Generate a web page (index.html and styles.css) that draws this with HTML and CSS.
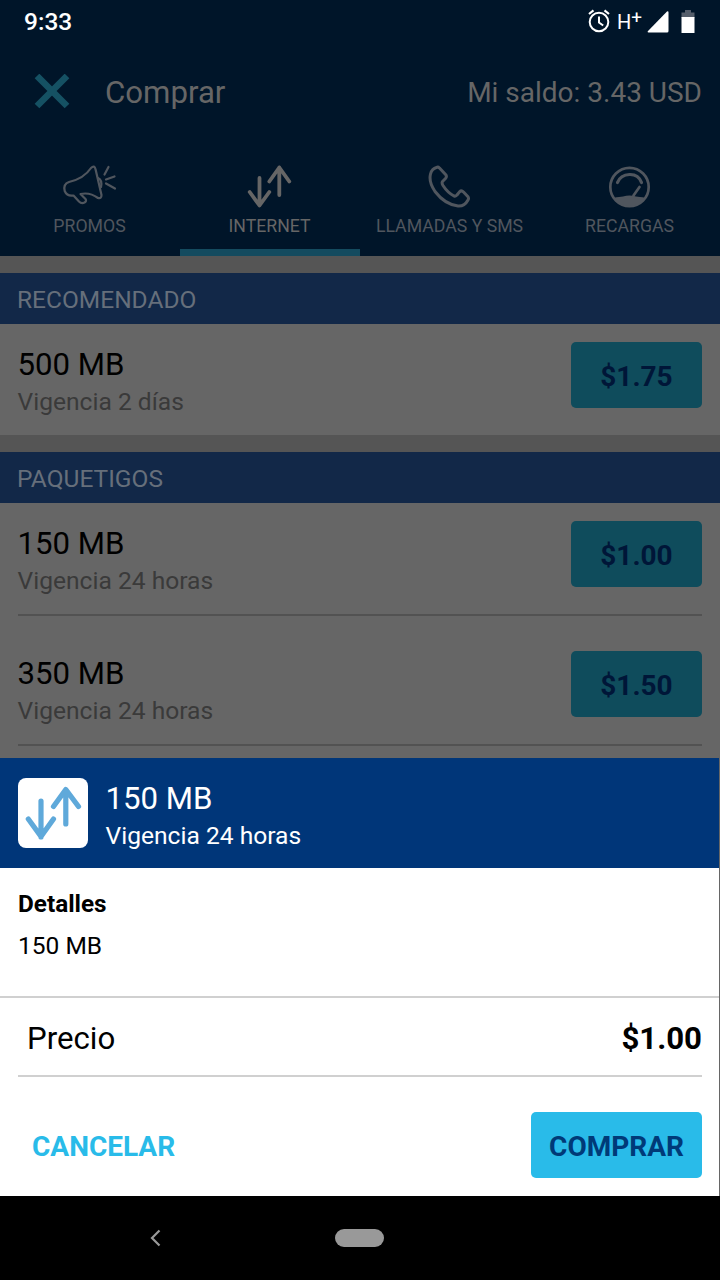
FILE: index.html
```html
<!DOCTYPE html>
<html lang="es">
<head>
<meta charset="utf-8">
<title>Comprar</title>
<link rel="stylesheet" href="styles.css">
</head>
<body>
<div class="screen">
  <header class="top">
    <div class="status">
      <span class="clock">9:33</span>
      <div class="status-icons">
        <svg class="alarm" width="24" height="26" viewBox="0 0 24 26" fill="none" stroke="#fff" stroke-width="2"><circle cx="12" cy="13" r="9.3"/><path d="M12 7.500v6l4.200 3"/><path d="M2 5 6.500 1.300M22 5 17.500 1.300" stroke-width="2.200"/></svg>
        <span class="net">H<span class="plus">+</span></span>
        <svg class="signal" width="22" height="22" viewBox="0 0 22 22"><path d="M20 .6q1.500-.8 1.500 1V20q0 1.500-1.500 1.500H1.500q-1.500-.3-.5-1.500z" fill="#fff"/></svg>
        <svg class="battery" width="14" height="24" viewBox="0 0 14 24"><path d="M4 0h6v2.500h3.500V8H.5V2.500H4z" fill="#555e6b"/><path d="M.5 7h13v16h-13z" fill="#fff"/></svg>
      </div>
    </div>
    <div class="appbar">
      <svg class="close" width="36" height="36" viewBox="0 0 36 36"><path d="M3 2 33 32M33 2 3 32" stroke="#155163" stroke-width="6.600"/></svg>
      <h1 class="title">Comprar</h1>
      <span class="balance">Mi saldo: 3.43 USD</span>
    </div>
    <nav class="tabs">
      <div class="tab">
        <svg class="tab-icon" width="60" height="48" viewBox="0 0 60 48" fill="none" stroke="#50565e" stroke-width="2.200" stroke-linecap="round" stroke-linejoin="round"><path d="M31 8Q34.500 4.500 35.600 9.500L41.500 35Q41.500 39 38 38Q30 32 20.500 34L25.500 39Q27 41 24.500 42.500Q21.500 44 19 41.500L13.500 35.500Q7 36.500 4.700 31Q3 24 9 22Q24 18.500 31 8Z"/><path d="M38 18Q42.500 20 41 27M44.500 14.500 48.500 7M46 19.500 54.500 16.500M46 23.500 55 28.500"/></svg>
        <span>PROMOS</span>
      </div>
      <div class="tab active">
        <svg class="tab-icon" width="60" height="48" viewBox="0 0 60 48" fill="none" stroke="#666" stroke-width="3.800" stroke-linecap="round" stroke-linejoin="round"><path d="M19.500 18v27M9.700 32l9.800 13.500L29.300 32M39.300 35V7.500M29.300 21.500 39.300 7.500 49.300 21.500"/></svg>
        <span>INTERNET</span>
      </div>
      <div class="tab">
        <svg class="tab-icon" width="60" height="48" viewBox="0 0 60 48" fill="none" stroke="#50565e" stroke-width="3" stroke-linecap="round" stroke-linejoin="round"><path transform="translate(0 1)" d="M16.500 6.500Q18 5.600 19.500 7L26 14Q27 16 25.500 17.500L22.500 20.500Q21.500 22 23 24.500Q27.500 31.500 34 35Q36 35.500 37 34L39.500 30.800Q41.500 29 43.500 31L48 35.800Q49 37.500 48 39Q44.500 45.500 38 45Q25 43.500 15 30.500Q8.500 21 10.500 13Q12 7.500 16.500 6.500Z"/></svg>
        <span>LLAMADAS Y SMS</span>
      </div>
      <div class="tab">
        <svg class="tab-icon" width="60" height="48" viewBox="0 0 60 48" fill="none" stroke="#50565e" stroke-width="2.700" stroke-linecap="round"><circle cx="29.500" cy="27" r="19.200"/><path d="M17.500 22.500Q20.500 14.800 29.500 14.500T41.500 22.500" stroke-width="3.200"/><path d="M33.500 35.500 39.500 27"/><path d="M13.500 38Q20 36.500 23 36.500Q29.500 34.500 36 36.500Q39 36.500 45.500 38Q39 46 29.500 46T13.500 38Z" fill="#50565e" stroke="none"/></svg>
        <span>RECARGAS</span>
      </div>
    </nav>
  </header>

  <main class="list">
    <section class="group">
      <h2 class="band">RECOMENDADO</h2>
      <div class="item"><div><p class="name">500 MB</p><p class="term">Vigencia 2 días</p></div><div class="price">$1.75</div></div>
    </section>
    <section class="group">
      <h2 class="band">PAQUETIGOS</h2>
      <div class="item"><div><p class="name">150 MB</p><p class="term">Vigencia 24 horas</p></div><div class="price">$1.00</div></div>
      <hr class="rule">
      <div class="item"><div><p class="name">350 MB</p><p class="term">Vigencia 24 horas</p></div><div class="price">$1.50</div></div>
      <hr class="rule">
    </section>
  </main>

  <section class="sheet">
    <div class="sheet-head">
      <div class="tile"><svg width="70" height="70" viewBox="0 0 70 70" fill="none" stroke="#5fa9da" stroke-width="5.200" stroke-linecap="round" stroke-linejoin="round"><path d="M23 23v36M10.300 41 23 58.500 35.500 41M47.800 46V12M35.500 28.500 47.800 11.500 60.500 28.500"/></svg></div>
      <div class="sheet-text"><p class="name">150 MB</p><p class="term">Vigencia 24 horas</p></div>
    </div>
    <div class="details">
      <h3 class="details-title">Detalles</h3>
      <p class="details-text">150 MB</p>
    </div>
    <div class="total"><span class="total-label">Precio</span><span class="total-value">$1.00</span></div>
    <div class="actions"><span class="cancel">CANCELAR</span><div class="buy">COMPRAR</div></div>
  </section>

  <footer class="navbar">
    <svg class="back" width="12" height="18" viewBox="0 0 12 18"><path d="M9.500 1.500 2 9l7.500 7.500" fill="none" stroke="#999" stroke-width="2.200"/></svg>
    <div class="home"></div>
  </footer>
</div>
</body>
</html>
```
FILE: styles.css
```css
* { box-sizing: border-box; margin: 0; padding: 0; }
body { width: 720px; height: 1280px; background: #666; font-family: Roboto, "Liberation Sans", sans-serif; overflow: hidden; }
svg { display: block; flex: none; }
span, p, h1, h2, h3 { white-space: nowrap; }
.screen { width: 720px; height: 1280px; display: flex; flex-direction: column; }

.top { height: 256px; background: #001529; flex: none; }
.status { height: 44px; padding: 0 25px 0 24px; display: flex; justify-content: space-between; align-items: center; color: #fff; }
.clock { font-size: 24.5px; font-weight: 500; line-height: 44px; }
.status-icons { display: flex; align-items: center; height: 42px; }
.net { font-size: 20px; line-height: 22px; margin-left: 6px; display: flex; }
.plus { font-size: 19px; line-height: 14px; }
.signal { margin-left: 5px; }
.battery { margin-left: 12px; }
.appbar { height: 96px; padding: 0 18px 0 34px; display: flex; align-items: center; color: #666; }
.title { margin-left: 35px; padding-top: 2px; font-size: 31.2px; font-weight: 400; line-height: 40px; }
.balance { margin-left: auto; font-size: 28px; line-height: 40px; padding-top: 1px; }
.tabs { height: 116px; display: grid; grid-template-columns: repeat(4, 180px); }
.tab { display: flex; flex-direction: column; align-items: center; padding-top: 20px; font-size: 17.700px; line-height: 24px; color: #50565e; gap: 6px; border-bottom: 7px solid transparent; }
.tab span { margin-left: -1px; }
.tab.active { border-color: #144b5f; color: #666; }

.list { height: 502px; flex: none; background: #666; overflow: hidden; }
.group { border-top: 17px solid #555; }
.band { height: 51px; padding: 0 17px; background: #122848; color: #666f7b; font-size: 24.500px; font-weight: 400; line-height: 54px; }
.item { height: 111px; padding: 18px 18px 0 17.5px; display: flex; justify-content: space-between; align-items: flex-start; }
.name { font-size: 31.2px; line-height: 36px; }
.term { font-size: 24.600px; line-height: 28px; }
.item .name { margin-top: 5px; color: #000; }
.item .term { margin-top: 5px; color: #3a3a3a; }
.price { width: 131px; height: 66px; border-radius: 5px; background: #0f4c5c; color: #001638; text-align: center; font-size: 28px; font-weight: 700; line-height: 69px; }
.rule { height: 2px; margin: 0 18px 17px; border: 0; background: #525252; }

.sheet { width: 719px; height: 438px; flex: none; background: #fff; color: #000; }
.sheet-head { height: 110px; padding: 0 18px; display: flex; align-items: center; gap: 17.5px; background: #003679; color: #fff; }
.sheet-text { padding-top: 4px; }
.sheet-text .term { margin-top: 5px; }
.tile { width: 70px; height: 70px; border-radius: 8px; background: #fff; }
.details { height: 130px; padding: 21px 18px 0; border-bottom: 2px solid #d0d0d0; }
.details-title { font-size: 24.300px; font-weight: 700; line-height: 30px; }
.details-text { margin-top: 12px; font-size: 24.500px; line-height: 30px; }
.total { height: 79px; margin: 0 17px 0 18px; padding: 0 0 0 9px; display: flex; justify-content: space-between; border-bottom: 2px solid #d0d0d0; line-height: 81px; }
.total-label { font-size: 31.2px; }
.total-value { font-size: 31.2px; font-weight: 700; }
.actions { height: 101px; margin: 35px 17px 0 32px; display: flex; justify-content: space-between; font-size: 28px; font-weight: 700; line-height: 70px; }
.cancel { color: #29bbe9; }
.buy { width: 171px; height: 66px; border-radius: 5px; background: #29bbe9; color: #003a78; text-align: center; }

.navbar { height: 84px; flex: none; background: #000; display: flex; align-items: center; padding-left: 150px; }
.home { width: 49px; height: 18px; margin-left: 173px; border-radius: 9px; background: #999; }
```
